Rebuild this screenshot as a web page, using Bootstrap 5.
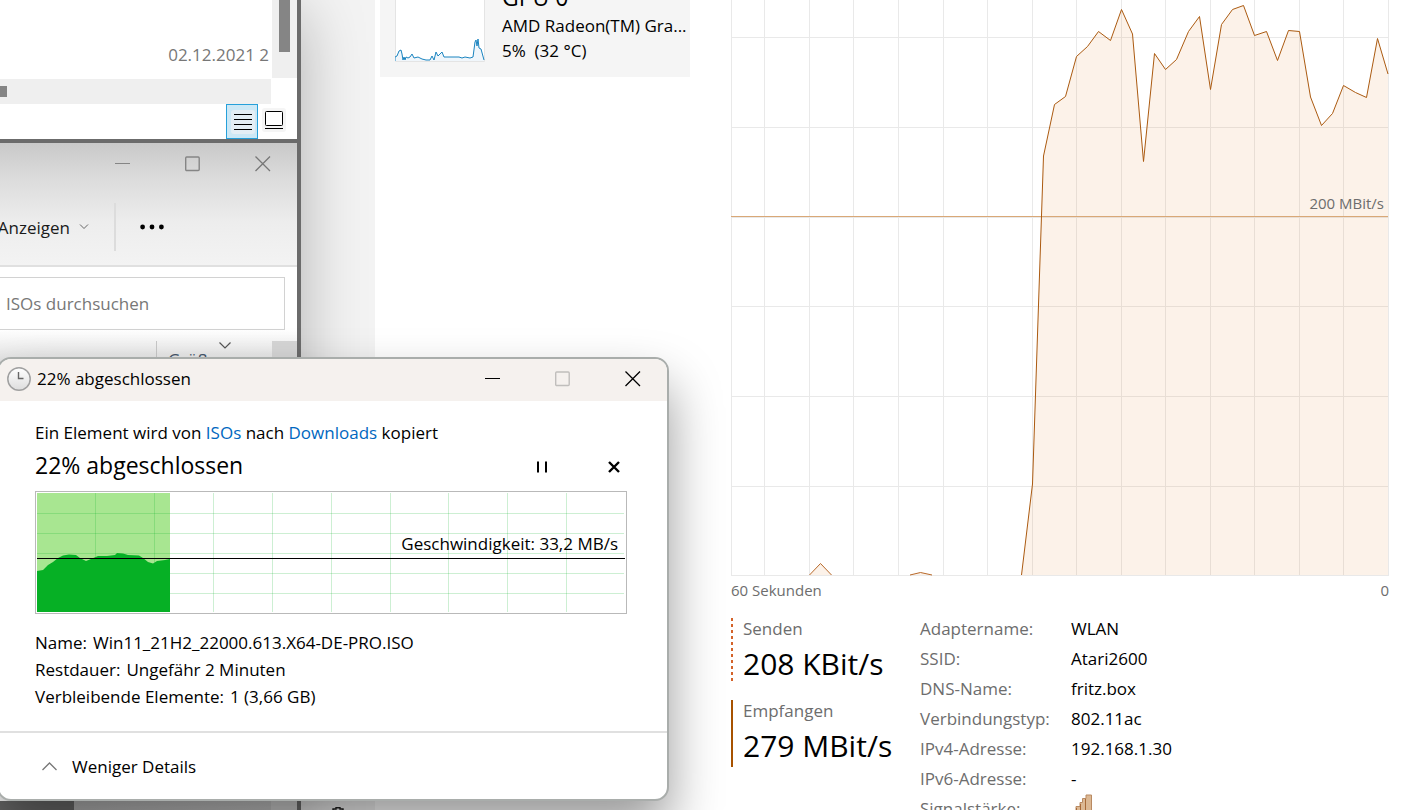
<!DOCTYPE html>
<html lang="de">
<head>
<meta charset="utf-8">
<meta name="viewport" content="width=device-width, initial-scale=1">
<title>22% abgeschlossen</title>
<link rel="stylesheet" href="https://cdn.jsdelivr.net/npm/bootstrap@5.3.0/dist/css/bootstrap.min.css">
<style>
body{font-family:"Open Sans","Noto Sans",sans-serif;font-size:17px;line-height:27px;color:#000;background:#fff}
svg{display:block}
.plain{border:0;background:none;padding:0;color:inherit;display:flex;align-items:center;justify-content:center}
.desktop{height:100vh;overflow:hidden}
/* Task-Manager */
.rail{width:375px;background:#f3f3f3}
.rail-foot{padding-left:331px}
.devices{width:315px;padding-left:5px}
.device{height:77px;background:#f5f5f5;padding:0 0 14px 15px}
.device-info{width:188px;line-height:25px;margin-left:17px}
.device-name{font-size:23px;line-height:31px}
.thumb-chart{margin-bottom:1px}
.perf{padding:0 15px 0 41px}
.perf-chart{height:576px}
.limit{right:5px;top:193px}
.axis{font-size:15px;line-height:20px;color:#6d6d6d}
.limit,.axis span{white-space:nowrap}
.muted{color:#6d6d6d}
.stats{padding-top:14px}
.rates{width:189px;padding-top:4px}
.rate{border-left:2px solid #a75200;padding-left:10px;height:67px;margin-bottom:0}
.rate-send{border-left:0;padding-left:12px;height:64px;margin-bottom:18px;background:repeating-linear-gradient(#d4632a 0 3px,transparent 3px 6px) 0 0/2px 100% no-repeat}
.rate dt,.facts dt{font-weight:400}
.rate dt{line-height:22px}
.rate dd{font-size:30px;line-height:48px;white-space:nowrap}
.facts{display:grid;grid-template-columns:151px 1fr;line-height:30px;white-space:nowrap}
.facts dd{margin:0}
/* Explorer */
.explorers{width:301px;height:100%;left:0;top:0;border-right:4px solid #6b6b6b;background:#fff;box-shadow:0 12px 60px rgba(0,0,0,.28)}
.files{height:143px;border-bottom:4px solid #6b6b6b}
.file-row{height:78px;color:#777}
.date{padding:0 3px 10px 0}
.track-v{width:25px;background:#efefef;padding-left:7px}
.thumb-v{width:11px;height:52px;background:#858585}
.track-h{width:271px;height:25px;background:#efefef;margin-top:1px}
.thumb-h{width:7px;height:11px;background:#858585}
.views{height:35px;padding-right:8px}
.view-btn{width:31px;padding-bottom:4px}
.view-btn.on{width:32px;padding:0 0 0 2px;background:#cce8f6;border:1px solid #26a0da}
.ribbon{height:124px;background:linear-gradient(#c9c9c9,#dcdcdc 30%,#ededed 65%,#f3f3f3);border-bottom:2px solid #e0e0e0}
.win-btns{gap:54px;padding:13px 26px 0 0}
.tools{height:48px;margin-top:31px;color:#1a1a1a}
.view-menu{width:89px;gap:9px;justify-content:flex-end}
.divider{width:2px;background:#dcdcdc;margin-left:25px}
.more{margin-left:24px}
.search-box{width:285px;height:53px;margin-top:10px;border:1px solid #d2d2d2;border-left:0;padding:0 6px;color:#777;background:#fff}
.search-box::placeholder{color:#777;opacity:1}
.list-head{height:69px;padding-top:11px;background:linear-gradient(#fff,#e4e4e4 45%)}
.col-name{width:157px;border-right:1px solid #c8c8c8}
.col-size{width:62px;padding:5px 0 0 11px;color:#44546a}
.sort{margin-top:1px}
.gutter{width:25px;background:#d6d6d6}
.bottom-scroll{height:9px;background:linear-gradient(90deg,#686868 74px,#b0b0b0 74px,#bdbdbd 271px,#cacaca 271px)}
/* Kopierdialog */
.copy-dialog{left:-3px;top:357px;width:672px;border:2px solid #a9adab;border-radius:14px;background:#fff;box-shadow:0 28px 52px rgba(0,0,0,.4);overflow:hidden}
.titlebar{height:42px;background:#f5f1ee;padding:0 26px 3px 8px}
.title-text{margin-left:6px}
.title-btns{gap:54px}
.dialog-main{height:330px;padding:18px 40px 0 36px}
.dialog-main a{color:#0067c0;text-decoration:none}
.headline{font-size:23px;line-height:38px;font-weight:400}
.ops{gap:60px;padding:3px 7px 0 0}
.speed-chart{height:123px;border:1px solid #b9b9b9;padding:1px;margin-top:7px}
.speed{right:8px;top:38px}
.facts-copy{margin-top:15px}
.facts-copy span{margin-left:6px}
.dialog-foot{height:68px;border-top:2px solid #e0e0e0;padding-left:43px}
.fewer{gap:14px}
</style>
</head>
<body>
<div class="desktop position-relative">

  <main class="d-flex h-100">
    <div class="rail flex-shrink-0 d-flex align-items-end">
      <div class="rail-foot"><svg width="14" height="3" viewBox="0 0 14 3"><path d="M2 3V2H5V0.8H9V2H12V3" fill="none" stroke="#222" stroke-width="1.4"/></svg></div>
    </div>
    <div class="devices flex-shrink-0">
      <div class="device d-flex align-items-end overflow-hidden">
        <svg class="thumb-chart flex-shrink-0" width="90" height="62" viewBox="0 0 90 62"><path d="M.5 0V61.5H89.5V0" fill="#fff" stroke="#e4e4e4"/><path d="M0 61V57L2 56L4 51L6 50L7 54L8 60L9 57L10 60L11 57L13 58L15 57L17 54L19 58L23 57L27 59L31 60L35 60L37 56L39 60L41 52L43 56L45 54L47 52L49 57H64L67 58L70 57L75 58L78 57L80 42L81 40L82 46L83 39L84 48L86 49L89 60V61Z" fill="#f0f6fb"/><path d="M0 61V57L2 56L4 51L6 50L7 54L8 60L9 57L10 60L11 57L13 58L15 57L17 54L19 58L23 57L27 59L31 60L35 60L37 56L39 60L41 52L43 56L45 54L47 52L49 57H64L67 58L70 57L75 58L78 57L80 42L81 40L82 46L83 39L84 48L86 49L89 60" fill="none" stroke="#1a84c0"/></svg>
        <div class="device-info flex-shrink-0 text-nowrap">
          <div class="device-name">GPU 0</div>
          <div>AMD Radeon(TM) Gra...</div>
          <div>5%&nbsp; (32 °C)</div>
        </div>
      </div>
    </div>
    <section class="perf flex-grow-1">
      <div class="position-relative">
        <svg class="perf-chart w-100" viewBox="731 0 658 576" preserveAspectRatio="none">
          <path d="M731.5 0V576M764.5 0V576M809.5 0V576M853.5 0V576M898.5 0V576M943.5 0V576M987.5 0V576M1032.5 0V576M1076.5 0V576M1121.5 0V576M1165.5 0V576M1210.5 0V576M1254.5 0V576M1299.5 0V576M1343.5 0V576M1388.5 0V576M731 37.5H1388M731 127.5H1388M731 217.5H1388M731 306.5H1388M731 396.5H1388M731 486.5H1388M731 575.5H1388" fill="none" stroke="#e9e9e9"/>
          <path d="M1021.5 575L1032.5 484L1043.5 156L1054.5 104.5L1065.5 96.5L1076.5 56.5L1087.5 46.5L1098.5 31.5L1110.5 40.5L1121.5 9.5L1132.5 34L1143.5 161.5L1154.5 53.5L1165.5 69.5L1176.5 59.5L1188.5 31.5L1199.5 16.5L1210.5 89.5L1221.5 24.5L1232.5 9.5L1243.5 5.5L1254.5 35.5L1266.5 31.5L1277.5 60.5L1288.5 30.5L1299.5 31.5L1310.5 97L1321.5 125.5L1332.5 113.5L1343.5 85.5L1355.5 92.5L1366.5 97.5L1377.5 38.5L1388 74V575Z" fill="#e17d23" fill-opacity=".1"/>
          <path d="M809.5 575L820.5 563.5L831.5 575M910 575L920.5 572.5L932 575" fill="#fcf2e9" stroke="#b8692a"/>
          <path d="M731 216.5H1388" stroke="#d9a877"/>
          <path d="M1021.5 575L1032.5 484L1043.5 156L1054.5 104.5L1065.5 96.5L1076.5 56.5L1087.5 46.5L1098.5 31.5L1110.5 40.5L1121.5 9.5L1132.5 34L1143.5 161.5L1154.5 53.5L1165.5 69.5L1176.5 59.5L1188.5 31.5L1199.5 16.5L1210.5 89.5L1221.5 24.5L1232.5 9.5L1243.5 5.5L1254.5 35.5L1266.5 31.5L1277.5 60.5L1288.5 30.5L1299.5 31.5L1310.5 97L1321.5 125.5L1332.5 113.5L1343.5 85.5L1355.5 92.5L1366.5 97.5L1377.5 38.5L1388 74" fill="none" stroke="#ab5a10"/>
        </svg>
        <div class="limit axis position-absolute">200 MBit/s</div>
      </div>
      <div class="axis d-flex justify-content-between mt-1"><span>60 Sekunden</span><span>0</span></div>
      <div class="stats d-flex">
        <div class="rates flex-shrink-0">
          <dl class="rate rate-send"><dt class="muted">Senden</dt><dd class="m-0">208 KBit/s</dd></dl>
          <dl class="rate"><dt class="muted">Empfangen</dt><dd class="m-0">279 MBit/s</dd></dl>
        </div>
        <dl class="facts m-0">
          <dt class="muted">Adaptername:</dt><dd>WLAN</dd>
          <dt class="muted">SSID:</dt><dd>Atari2600</dd>
          <dt class="muted">DNS-Name:</dt><dd>fritz.box</dd>
          <dt class="muted">Verbindungstyp:</dt><dd>802.11ac</dd>
          <dt class="muted">IPv4-Adresse:</dt><dd>192.168.1.30</dd>
          <dt class="muted">IPv6-Adresse:</dt><dd>-</dd>
          <dt class="muted">Signalstärke:</dt><dd><svg width="22" height="22" viewBox="0 0 22 22"><path d="M1 22V17H5V12.500H9V8.500H11.500V4.500H15V1H20.500V22Z" fill="#dcb893" stroke="#b98a62"/><path d="M5.500 14V22M9.500 10V22M14.500 5V22" stroke="#a86a38"/></svg></dd>
        </dl>
      </div>
    </section>
  </main>

  <section class="explorers position-absolute d-flex flex-column">
    <div class="files flex-shrink-0">
      <div class="file-row d-flex">
        <div class="date flex-grow-1 d-flex align-items-end justify-content-end">02.12.2021 2</div>
        <div class="track-v"><div class="thumb-v"></div></div>
      </div>
      <div class="track-h d-flex align-items-center"><div class="thumb-h"></div></div>
      <div class="views d-flex justify-content-end">
        <button class="plain view-btn on" aria-label="Details"><svg width="24" height="24" viewBox="0 0 24 24"><rect width="24" height="24" rx="3" fill="#e4eef5"/><path d="M3 4.500H21M3 9.500H21M3 14.500H21M3 19.500H21" stroke="#000"/></svg></button>
        <button class="plain view-btn" aria-label="Große Symbole"><svg width="24" height="24" viewBox="0 0 24 24"><rect width="24" height="24" rx="3" fill="#f5f5f5"/><rect x="3.500" y="3.500" width="17" height="14" rx="1" fill="#fff" stroke="#000"/><path d="M3 20.500H21" stroke="#000"/></svg></button>
      </div>
    </div>
    <div class="ribbon flex-shrink-0">
      <div class="win-btns d-flex justify-content-end">
        <button class="plain" aria-label="Minimieren"><svg width="16" height="16" viewBox="0 0 16 16"><path d="M0 7.500H15" stroke="#858585"/></svg></button>
        <button class="plain" aria-label="Maximieren"><svg width="16" height="16" viewBox="0 0 16 16"><rect x="0.700" y="1" width="13.500" height="13.500" rx="1" fill="none" stroke="#858585" stroke-width="1.400"/></svg></button>
        <button class="plain" aria-label="Schließen"><svg width="16" height="16" viewBox="0 0 16 16"><path d="M.5 .5L15 15M15 .5L.5 15" stroke="#777" stroke-width="1.300"/></svg></button>
      </div>
      <div class="tools d-flex align-items-stretch">
        <button class="plain view-menu">Anzeigen<svg class="flex-shrink-0" width="10" height="6" viewBox="0 0 10 6"><path d="M1 .5L5 4.500L9 .5" fill="none" stroke="#666"/></svg></button>
        <div class="divider"></div>
        <button class="plain more" aria-label="Mehr"><svg width="26" height="6" viewBox="0 0 26 6"><circle cx="2.600" cy="3" r="2.400"/><circle cx="12" cy="3" r="2.400"/><circle cx="21.400" cy="3" r="2.400"/></svg></button>
      </div>
    </div>
    <input class="search-box flex-shrink-0" type="search" aria-label="ISOs durchsuchen" placeholder="ISOs durchsuchen">
    <div class="list-head d-flex flex-shrink-0">
      <div class="col-name"></div>
      <div class="col-size">Größe</div>
      <svg class="sort" width="12" height="7" viewBox="0 0 12 7"><path d="M.5 .5L6 6L11.500 .5" fill="none" stroke="#555" stroke-width="1.200"/></svg>
      <div class="gutter ms-auto"></div>
    </div>
    <div class="bottom-scroll mt-auto flex-shrink-0"></div>
  </section>

  <section class="copy-dialog position-absolute" role="dialog" aria-label="22% abgeschlossen">
    <header class="titlebar d-flex align-items-center">
      <svg width="24" height="24" viewBox="0 0 24 24"><defs><linearGradient id="face" x1="0" y1="0" x2="0" y2="1"><stop offset="0" stop-color="#fff"/><stop offset="1" stop-color="#ddd"/></linearGradient></defs><circle cx="12" cy="12" r="11.200" fill="url(#face)" stroke="#a0a0a0" stroke-width="1.500"/><path d="M11.500 5V11.500H16.500" fill="none" stroke="#666" stroke-width="1.400"/></svg>
      <div class="title-text">22% abgeschlossen</div>
      <div class="title-btns d-flex ms-auto">
        <button class="plain" aria-label="Minimieren"><svg width="16" height="16" viewBox="0 0 16 16"><path d="M0 7.500H15" stroke="#000"/></svg></button>
        <button class="plain" disabled aria-label="Maximieren"><svg width="16" height="16" viewBox="0 0 16 16"><rect x="0.700" y="1" width="13.500" height="13.500" rx="1" fill="none" stroke="#c0bebc" stroke-width="1.400"/></svg></button>
        <button class="plain" aria-label="Schließen"><svg width="16" height="16" viewBox="0 0 16 16"><path d="M.5 .5L15 15M15 .5L.5 15" stroke="#000" stroke-width="1.300"/></svg></button>
      </div>
    </header>
    <div class="dialog-main">
      <div>Ein Element wird von <a href="#">ISOs</a> nach <a href="#">Downloads</a> kopiert</div>
      <div class="d-flex align-items-center">
        <h1 class="headline m-0">22% abgeschlossen</h1>
        <div class="ops d-flex ms-auto">
          <button class="plain" aria-label="Anhalten"><svg width="12" height="12" viewBox="0 0 12 12"><path d="M2 .5V11.500M10 .5V11.500" stroke="#000" stroke-width="2"/></svg></button>
          <button class="plain" aria-label="Abbrechen"><svg width="12" height="12" viewBox="0 0 12 12"><path d="M1 1L11 11M11 1L1 11" stroke="#000" stroke-width="2.400"/></svg></button>
        </div>
      </div>
      <div class="speed-chart position-relative">
        <svg class="w-100 h-100" viewBox="37 493 588 119" preserveAspectRatio="none">
          <rect x="37" y="493" width="133" height="119" fill="#a8e691"/>
          <path d="M95.500 493V612M154.500 493V612M213.500 493V612M272.500 493V612M331.500 493V612M390.500 493V612M448.500 493V612M507.500 493V612M566.500 493V612M37 513.500H624M37 533.500H624M37 553.500H624M37 573.500H624M37 593.500H624" fill="none" stroke="#06b025" stroke-opacity=".2"/>
          <path d="M37 612V571L43 570L48 565L53 562L58 558L63 555.500L69 554.500L76 555L80 558L86 561L91 559L98 556L107 556L115 555L117 553L123 553.500L128 555L139 555.500L143 558L148 562L153 563.500L157 561L165 560L170 559V612Z" fill="#06b025"/>
          <path d="M37 558.500H625" stroke="#000"/>
        </svg>
        <div class="speed position-absolute">Geschwindigkeit: 33,2 MB/s</div>
      </div>
      <div class="facts-copy">
        <div>Name:<span>Win11_21H2_22000.613.X64-DE-PRO.ISO</span></div>
        <div>Restdauer:<span>Ungefähr 2 Minuten</span></div>
        <div>Verbleibende Elemente:<span>1 (3,66 GB)</span></div>
      </div>
    </div>
    <footer class="dialog-foot d-flex align-items-center">
      <button class="plain fewer"><svg width="16" height="9" viewBox="0 0 16 9"><path d="M.5 8L7.500 1L14.500 8" fill="none" stroke="#777" stroke-width="1.300"/></svg>Weniger Details</button>
    </footer>
  </section>
</div>
<script src="https://cdn.jsdelivr.net/npm/bootstrap@5.3.0/dist/js/bootstrap.bundle.min.js"></script>
</body>
</html>
